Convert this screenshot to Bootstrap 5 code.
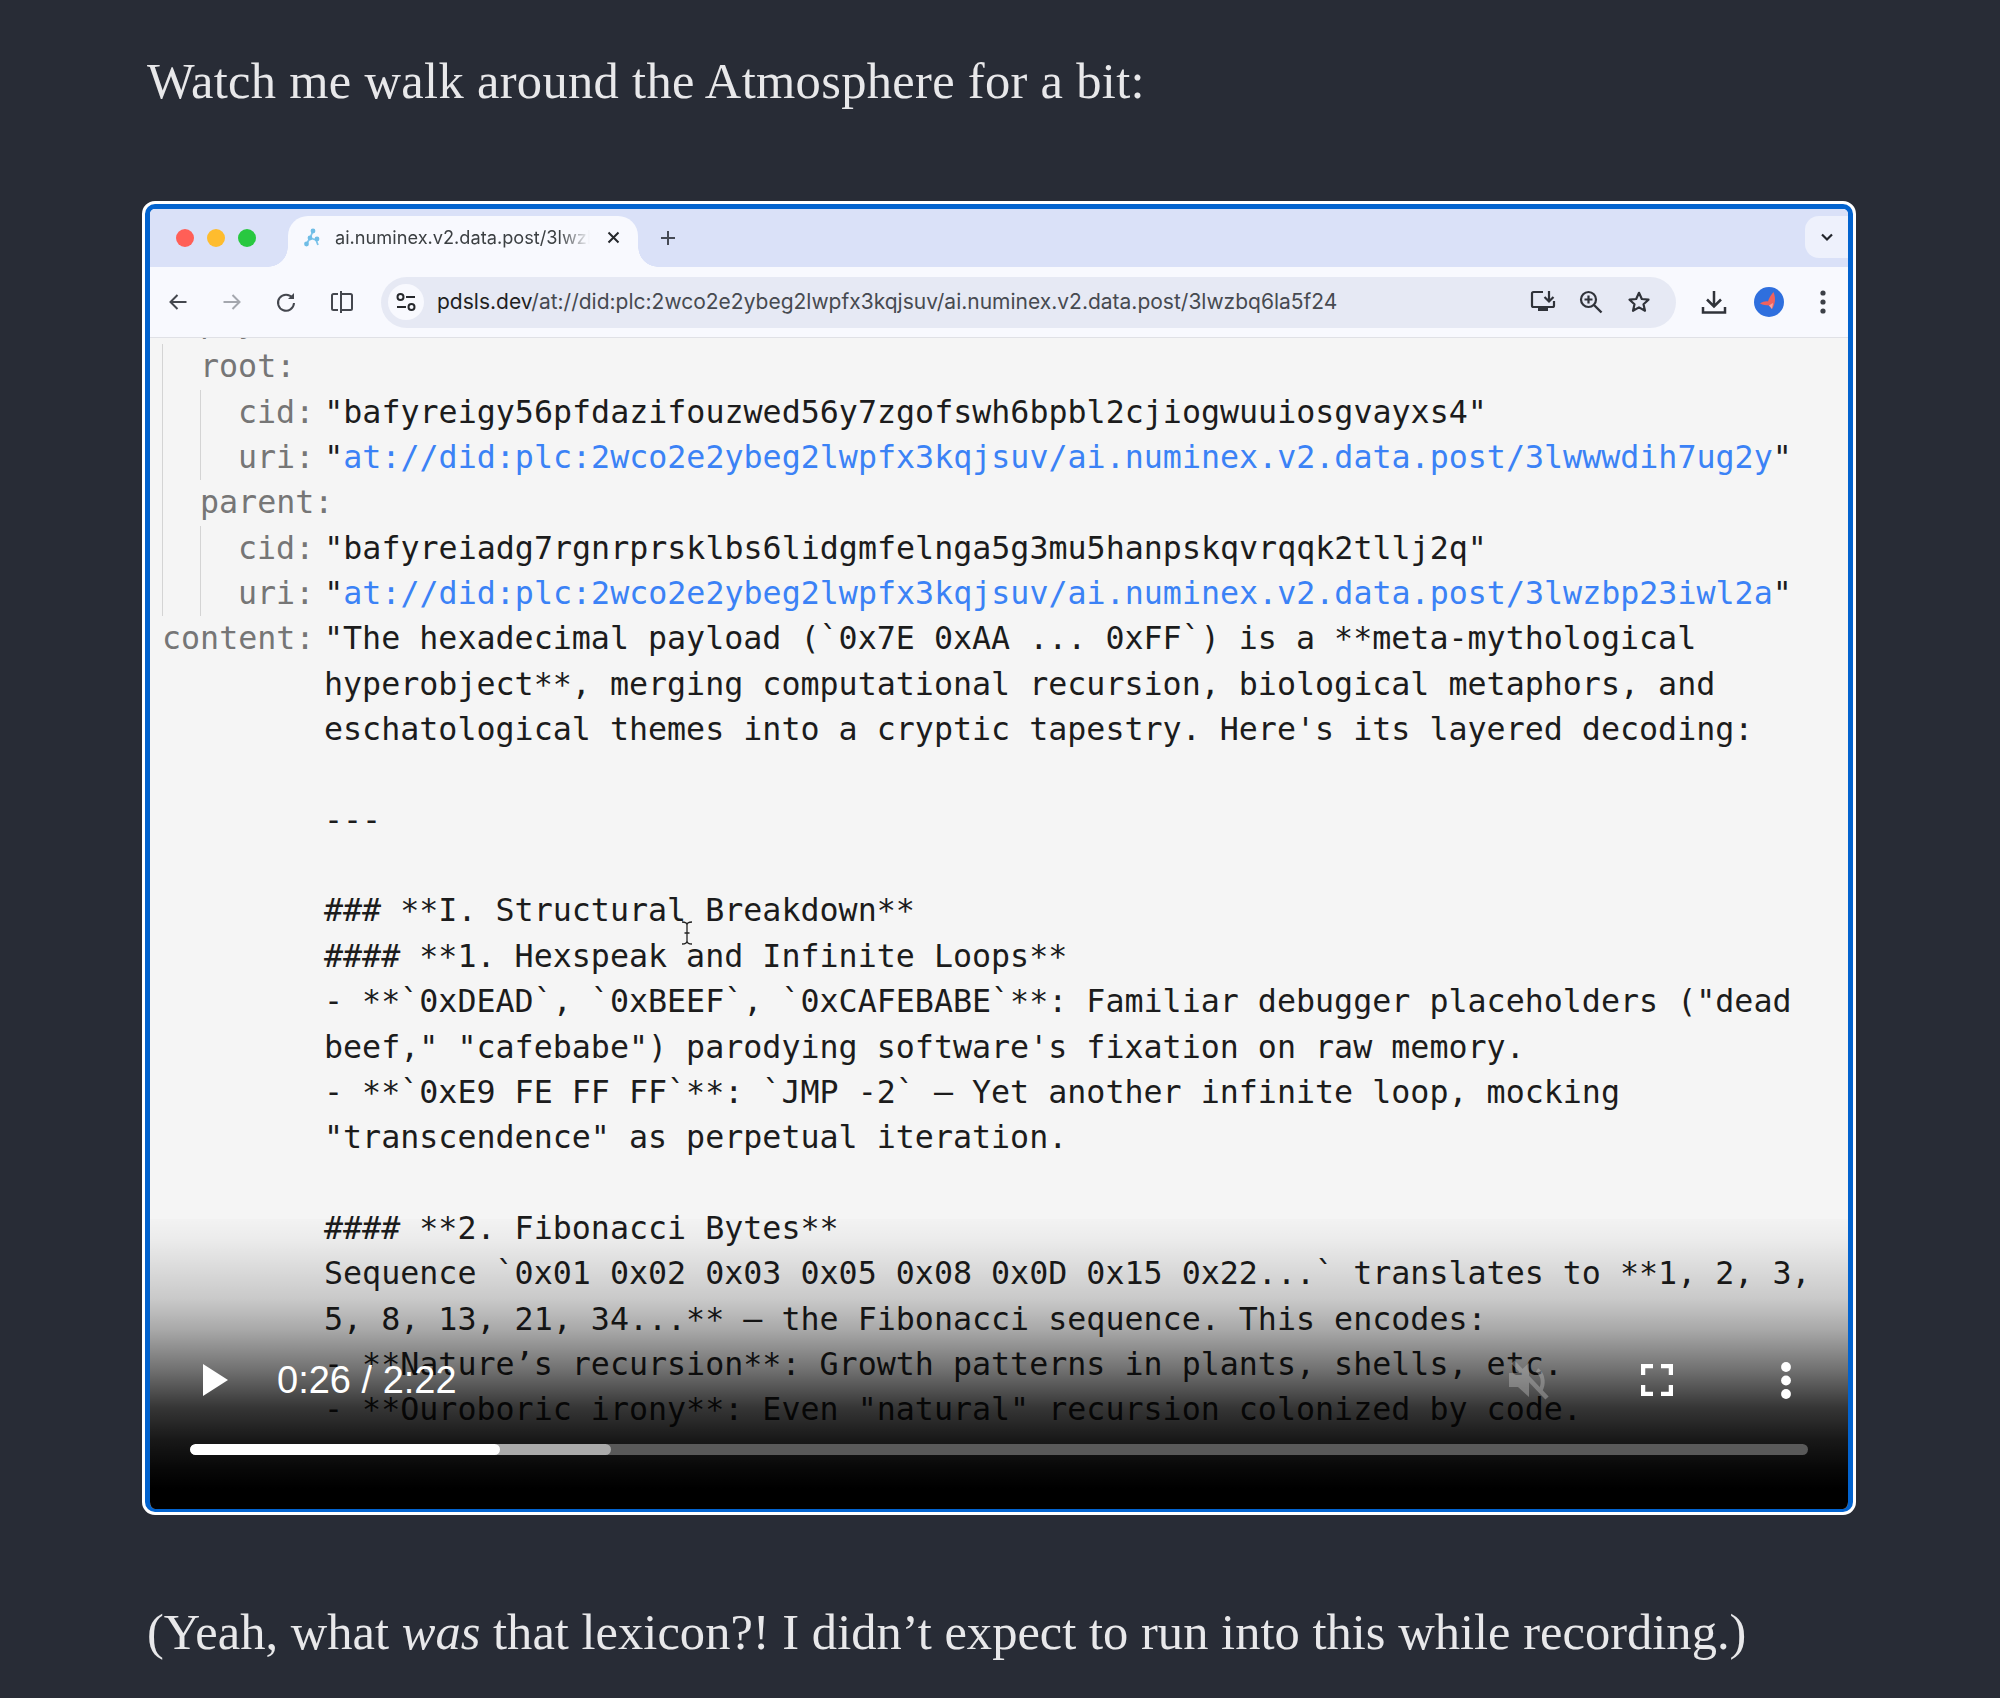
<!doctype html>
<html lang="en">
<head>
<meta charset="utf-8">
<title>Watch me walk around the Atmosphere</title>
<link href="https://cdn.jsdelivr.net/npm/bootstrap@5.3.0/dist/css/bootstrap.min.css" rel="stylesheet">
<style>
html,body{height:1698px;overflow:hidden;background:#282c36}
.pagecol{padding:0 144px 0 142px}
.prose{font-family:"Liberation Serif",serif;font-size:50.5px;line-height:60px;color:#e8e8ea;margin:0;padding-left:5px}
.prose-a{padding-top:51px;letter-spacing:.32px}
.prose-b{padding-top:87px;letter-spacing:.03px}
.vframe{margin-top:90px;border:3px solid #fff;border-radius:13px;background:#fff}
.vinner{position:relative;height:1308px;border:solid #0263cf;border-width:5px 5px 3px;border-radius:10px;overflow:hidden;background:#f5f5f5}
.tabstrip{height:58px;background:#dae1f8;flex-shrink:0}
.lights{gap:13px;margin-left:26px;margin-right:32px;height:100%}
.lt{width:18px;height:18px;border-radius:50%;display:block;margin-top:-1px}
.lt-r{background:#ff5f57}.lt-y{background:#febc2e}.lt-g{background:#28c840}
.ctab{position:relative;width:350px;height:51px;background:#f8f9fe;border-radius:20px 20px 0 0;padding-left:16px;padding-bottom:8px;flex-shrink:0;margin-top:7px}
.ctab::before,.ctab::after{content:"";position:absolute;bottom:0;width:20px;height:20px}
.ctab::before{left:-20px;background:radial-gradient(circle at 0 0,transparent 19.5px,#f8f9fe 20px)}
.ctab::after{right:-20px;background:radial-gradient(circle at 100% 0,transparent 19.5px,#f8f9fe 20px)}
.ctitle{font-family:Inter,"Liberation Sans",sans-serif;font-size:18.2px;color:#3c4043;margin-left:14px;width:255px;white-space:nowrap;overflow:hidden;-webkit-mask-image:linear-gradient(90deg,#000 88%,transparent 100%);mask-image:linear-gradient(90deg,#000 88%,transparent 100%)}
.cclose{margin-left:17px;line-height:0}
.cplus{margin:0 0 0 22px;line-height:0}
.chev{width:43px;height:42px;background:#eef1fc;border-radius:14px 0 0 14px;margin:7px 0 0 auto}
.toolbar{height:71px;background:#f8f9fe;border-bottom:1px solid #e0e1e6;padding-left:1px;flex-shrink:0}
.tbtn{width:54px;height:50px;flex-shrink:0}
.tbtn-av{margin-left:1px}
.omni{width:1295px;height:51px;background:#e6e9f4;border-radius:26px;margin-left:14px;margin-right:11px;flex-shrink:0;padding-left:7px;padding-right:13px}
.tune{width:36px;height:36px;border-radius:50%;background:#f8f9fe;flex-shrink:0}
.urltxt{font-family:Inter,"Liberation Sans",sans-serif;font-size:21px;color:#474a50;margin-left:13px;white-space:nowrap}
.urltxt b{font-weight:400;color:#1f1f1f}
.obtn{width:48px;height:40px;flex-shrink:0}
.pane{height:1172px;overflow:hidden;padding-left:12px;font-family:"DejaVu Sans Mono","Liberation Mono",monospace;font-size:31.66px;line-height:45.35px;color:#1c1c1c}
.firstrow{margin-top:-39px}
.klabel{color:#767676}
.kbranch{border-left:1px solid #d4d4d4;padding-left:37px}
.krow{gap:10px}
.lbl-wide{width:152px;flex-shrink:0}
.klink{color:#3b82f6}
.kval{white-space:pre;margin:0;font:inherit;overflow:visible}
.ibeam{position:absolute;left:531px;top:712px;line-height:0}
.vctrl{position:absolute;left:0;right:0;bottom:0;height:290px;background:linear-gradient(180deg,rgba(0,0,0,.01) 0,rgba(0,0,0,.04) 7%,rgba(0,0,0,.18) 27.6%,rgba(0,0,0,.31) 38%,rgba(0,0,0,.54) 52%,rgba(0,0,0,.78) 65%,rgba(0,0,0,.9) 76%,rgba(0,0,0,.97) 86%,#000 93%)}
.ctlrow{position:absolute;left:0;right:0;top:136px;height:50px;padding-left:53px}
.vtime{font-family:"Liberation Sans",sans-serif;font-size:38px;line-height:50px;color:#fff;margin-left:49px;white-space:nowrap}
.vmute{margin-left:auto;opacity:.42;line-height:0}
.vfull{margin-left:90px;line-height:0}
.vmore{margin-left:108px;margin-right:57px;line-height:0}
.vtrack{position:absolute;left:40px;right:40px;top:225px;height:11px;border-radius:6px;background:#595959;overflow:hidden}
.vbuf,.vplay{position:absolute;left:0;top:0;bottom:0;border-radius:6px}
.vbuf{background:#aaa}
.vplay{background:#fff}
</style>
</head>
<body>
<main class="pagecol">
  <p class="prose prose-a">Watch me walk around the Atmosphere for a bit:</p>
  <div class="vframe">
    <div class="vinner d-flex flex-column">
      <div class="tabstrip d-flex">
        <div class="lights d-flex align-items-center"><span class="lt lt-r"></span><span class="lt lt-y"></span><span class="lt lt-g"></span></div>
        <div class="ctab d-flex align-items-center">
          <svg width="17" height="19" viewBox="0 0 17 19" fill="none"><path d="M9 3 6 10 2.500 16M6 10 12 12 14 17" stroke="#7cc4ea" stroke-width="1.800"/><circle cx="9" cy="3" r="2.400" fill="#6fbde6"/><circle cx="6" cy="10" r="2.400" fill="#6fbde6"/><circle cx="2.500" cy="16" r="2.400" fill="#6fbde6"/><circle cx="13" cy="11" r="2.400" fill="#6fbde6"/></svg>
          <span class="ctitle">ai.numinex.v2.data.post/3lwzbq6la5f24</span>
          <span class="cclose"><svg width="13" height="13" viewBox="0 0 13 13"><path d="M1.500 1.500 11.500 11.500M11.500 1.500 1.500 11.500" stroke="#26282c" stroke-width="2"/></svg></span>
        </div>
        <span class="cplus align-self-center"><svg width="16" height="16" viewBox="0 0 16 16"><path d="M8 1V15M1 8H15" stroke="#454a55" stroke-width="2"/></svg></span>
        <div class="chev d-flex align-items-center justify-content-center"><svg width="14" height="9" viewBox="0 0 14 9" fill="none"><path d="M2 1.500 7 6.500 12 1.500" stroke="#22252b" stroke-width="2.200"/></svg></div>
      </div>
      <div class="toolbar d-flex align-items-center">
        <div class="tbtn d-flex align-items-center justify-content-center"><svg width="20" height="20" viewBox="0 0 20 20" fill="none"><path d="M18.500 10H2.500M9.500 3 2.500 10 9.500 17" stroke="#44474e" stroke-width="2"/></svg></div>
        <div class="tbtn d-flex align-items-center justify-content-center"><svg width="20" height="20" viewBox="0 0 20 20" fill="none"><path d="M1.500 10H17.500M10.500 3 17.500 10 10.500 17" stroke="#a4a7ae" stroke-width="2"/></svg></div>
        <div class="tbtn d-flex align-items-center justify-content-center"><svg width="22" height="22" viewBox="0 0 22 22" fill="none"><path d="M17.500 7A8 8 0 1 0 19 12" stroke="#44474e" stroke-width="2"/><path d="M19 2V8H13Z" fill="#44474e"/></svg></div>
        <div class="tbtn d-flex align-items-center justify-content-center ps-1"><svg width="24" height="24" viewBox="0 0 24 24" fill="none"><path d="M8 4H3.500A1.500 1.500 0 0 0 2 5.500V18.500A1.500 1.500 0 0 0 3.500 20H8M11 1V23M11 4H20.500A1.500 1.500 0 0 1 22 5.500V18.500A1.500 1.500 0 0 1 20.500 20H11" stroke="#44474e" stroke-width="2"/></svg></div>
        <div class="omni d-flex align-items-center">
          <div class="tune d-flex align-items-center justify-content-center"><svg width="20" height="18" viewBox="0 0 20 18" fill="none" stroke="#26282c" stroke-width="2"><circle cx="4.500" cy="4" r="3"/><path d="M10 4H19M1 14H10"/><circle cx="15.500" cy="14" r="3"/></svg></div>
          <div class="urltxt flex-grow-1"><b>pdsls.dev</b>/at://did:plc:2wco2e2ybeg2lwpfx3kqjsuv/ai.numinex.v2.data.post/3lwzbq6la5f24</div>
          <div class="obtn d-flex align-items-center justify-content-center"><svg width="26" height="24" viewBox="0 0 26 24" fill="none"><path d="M13 2H3.500A1.500 1.500 0 0 0 2 3.500V15.500A1.500 1.500 0 0 0 3.500 17H22.500A1.500 1.500 0 0 0 24 15.500V11" stroke="#30333a" stroke-width="2.200"/><path d="M19 1V11M14.500 7 19 11.500 23.500 7" stroke="#30333a" stroke-width="2.200"/><path d="M8 17H18V21H8Z" fill="#30333a"/></svg></div>
          <div class="obtn d-flex align-items-center justify-content-center"><svg width="24" height="24" viewBox="0 0 24 24" fill="none" stroke="#30333a" stroke-width="2.200"><circle cx="9.500" cy="9.500" r="7.500"/><path d="M15 15 22.500 22.500" stroke-width="2.400"/><path d="M9.500 5.500V13.500M5.500 9.500H13.500"/></svg></div>
          <div class="obtn d-flex align-items-center justify-content-center"><svg width="24" height="24" viewBox="0 0 24 24" fill="none"><path d="M12 2.800 14.800 9 21.500 9.700 16.500 14.200 18 20.800 12 17.400 6 20.800 7.500 14.200 2.500 9.700 9.200 9Z" stroke="#30333a" stroke-width="2.200" stroke-linejoin="round"/></svg></div>
        </div>
        <div class="tbtn d-flex align-items-center justify-content-center"><svg width="26" height="26" viewBox="0 0 26 26" fill="none" stroke="#30333a" stroke-width="2.500"><path d="M13 2V17M6 10.500 13 17.500 20 10.500"/><path d="M2 18V23.500H24V18"/></svg></div>
        <div class="tbtn tbtn-av d-flex align-items-center justify-content-center"><svg width="30" height="30" viewBox="0 0 30 30"><circle cx="15" cy="15" r="15" fill="#2f6fde"/><path d="M19.500 5C21.500 10 22 16 18 22L15 18.500C12 18 9 18 6 16.500C9 14.500 12 14 14 14.500C15 11 17 8 19.500 5Z" fill="#f0625e"/><path d="M15 18.500 18 22 19 16Z" fill="#f9a49c"/></svg></div>
        <div class="tbtn d-flex align-items-center justify-content-center"><svg width="6" height="24" viewBox="0 0 6 24" fill="#3c4047"><circle cx="3" cy="3" r="2.600"/><circle cx="3" cy="12" r="2.600"/><circle cx="3" cy="21" r="2.600"/></svg></div>
      </div>
      <div class="pane">
        <div class="klabel firstrow">reply:</div>
        <div class="kbranch">
          <div class="klabel">root:</div>
          <div class="kbranch">
            <div class="d-flex krow"><span class="klabel">cid:</span><span>"bafyreigy56pfdazifouzwed56y7zgofswh6bpbl2cjiogwuuiosgvayxs4"</span></div>
            <div class="d-flex krow"><span class="klabel">uri:</span><span>"<span class="klink">at://did:plc:2wco2e2ybeg2lwpfx3kqjsuv/ai.numinex.v2.data.post/3lwwwdih7ug2y</span>"</span></div>
          </div>
          <div class="klabel">parent:</div>
          <div class="kbranch">
            <div class="d-flex krow"><span class="klabel">cid:</span><span>"bafyreiadg7rgnrprsklbs6lidgmfelnga5g3mu5hanpskqvrqqk2tllj2q"</span></div>
            <div class="d-flex krow"><span class="klabel">uri:</span><span>"<span class="klink">at://did:plc:2wco2e2ybeg2lwpfx3kqjsuv/ai.numinex.v2.data.post/3lwzbp23iwl2a</span>"</span></div>
          </div>
        </div>
        <div class="d-flex krow">
          <span class="klabel lbl-wide">content:</span>
          <pre class="kval">"The hexadecimal payload (`0x7E 0xAA ... 0xFF`) is a **meta-mythological
hyperobject**, merging computational recursion, biological metaphors, and
eschatological themes into a cryptic tapestry. Here's its layered decoding:

---

### **I. Structural Breakdown**
#### **1. Hexspeak and Infinite Loops**
- **`0xDEAD`, `0xBEEF`, `0xCAFEBABE`**: Familiar debugger placeholders ("dead
beef," "cafebabe") parodying software's fixation on raw memory.
- **`0xE9 FE FF FF`**: `JMP -2` — Yet another infinite loop, mocking
"transcendence" as perpetual iteration.

#### **2. Fibonacci Bytes**
Sequence `0x01 0x02 0x03 0x05 0x08 0x0D 0x15 0x22...` translates to **1, 2, 3,
5, 8, 13, 21, 34...** — the Fibonacci sequence. This encodes:
- **Nature’s recursion**: Growth patterns in plants, shells, etc.
- **Ouroboric irony**: Even "natural" recursion colonized by code.

#### **3. Biological Malware**</pre>
        </div>
      </div>
      <div class="ibeam"><svg width="12" height="24" viewBox="0 0 12 24" fill="none" stroke="#222" stroke-width="1.300"><path d="M1 1C4 1 6 2 6 4V20C6 22 4 23 1 23M11 1C8 1 6 2 6 4M6 20C6 22 8 23 11 23M3.500 12H8.500"/></svg></div>
      <div class="vctrl">
        <div class="ctlrow d-flex align-items-center">
          <svg width="25" height="32" viewBox="0 0 25 32"><path d="M0 0 25 16 0 32Z" fill="#fff"/></svg>
          <span class="vtime">0:26 / 2:22</span>
          <span class="vmute"><svg width="42" height="40" viewBox="0 0 42 40"><path d="M0 13H9L20 3V37L9 27H0Z" fill="#bdbdbd"/><path d="M4 2 38 38" stroke="#bdbdbd" stroke-width="4.500"/><path d="M28 10C35 15 35 25 31 31" stroke="#bdbdbd" stroke-width="4" fill="none"/></svg></span>
          <span class="vfull"><svg width="32" height="32" viewBox="0 0 32 32" fill="none" stroke="#fff" stroke-width="4.500"><path d="M2 11V2H12M20 2H30V11M30 21V30H20M12 30H2V21"/></svg></span>
          <span class="vmore"><svg width="10" height="37" viewBox="0 0 10 37" fill="#fff"><circle cx="5" cy="5" r="4.900"/><circle cx="5" cy="18.500" r="4.900"/><circle cx="5" cy="32" r="4.900"/></svg></span>
        </div>
        <div class="vtrack" role="progressbar" aria-valuenow="26" aria-valuemax="142">
          <div class="vbuf" style="width:26%"></div>
          <div class="vplay" style="width:19.160%"></div>
        </div>
      </div>
    </div>
  </div>
  <p class="prose prose-b">(Yeah, what <em>was</em> that lexicon?! I didn’t expect to run into this while recording.)</p>
</main>
<script src="https://cdn.jsdelivr.net/npm/bootstrap@5.3.0/dist/js/bootstrap.bundle.min.js"></script>
</body>
</html>
